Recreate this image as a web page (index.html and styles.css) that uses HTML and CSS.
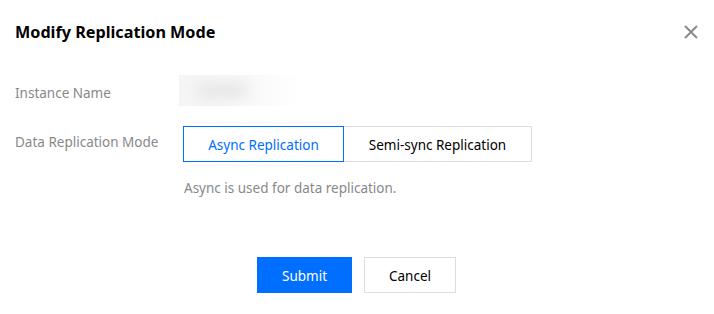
FILE: index.html
```html
<!DOCTYPE html>
<html>
<head>
    <title>Modify Replication Mode</title>
    <link rel="stylesheet" href="styles.css">
</head>
<body>
    <div class="dialog">
        <div class="dialog-header">
            <h2 class="dialog-title">Modify Replication Mode</h2>
            <button class="close-btn" aria-label="Close">
                <svg width="14" height="14" viewBox="0 0 14 14">
                    <path d="M1 1L13 13M13 1L1 13" stroke="#888" stroke-width="1.9" fill="none"/>
                </svg>
            </button>
        </div>

        <div class="form">
            <div class="form-row">
                <div class="form-label label-name">Instance Name</div>
                <div class="form-control">
                    <div class="masked-value"><span class="blur"></span></div>
                </div>
            </div>
            <div class="form-row">
                <div class="form-label label-mode">Data Replication Mode</div>
                <div class="form-control">
                    <div class="segment">
                        <button class="segment-item active">Async Replication</button>
                        <button class="segment-item">Semi-sync Replication</button>
                    </div>
                    <div class="form-help">Async is used for data replication.</div>
                </div>
            </div>
        </div>

        <div class="dialog-footer">
            <button class="btn btn-primary">Submit</button>
            <button class="btn">Cancel</button>
        </div>
    </div>
</body>
</html>
```

FILE: styles.css
```css
body {
    margin: 0;
    background: #fff;
    font-family: "Noto Sans", "Open Sans", sans-serif;
    font-size: 13.5px;
    color: #000;
}

.dialog {
    width: 714px;
    height: 314px;
    box-sizing: border-box;
    padding: 20px 15px 0 15px;
}

.dialog-header {
    display: flex;
    justify-content: space-between;
    align-items: center;
    height: 24px;
}

.dialog-title {
    margin: 0;
    font-size: 16.2px;
    font-weight: 700;
    line-height: 24px;
}

.close-btn {
    border: none;
    background: none;
    padding: 0;
    margin-right: 1px;
    width: 14px;
    height: 14px;
    cursor: pointer;
    display: flex;
}

.form {
    margin-top: 31px;
    display: flex;
    flex-direction: column;
    gap: 20px;
}

.form-row {
    display: flex;
    align-items: flex-start;
}

.form-label {
    width: 168px;
    color: #888;
    line-height: 20px;
}

.label-name {
    padding-top: 8px;
}

.label-mode {
    padding-top: 6px;
}

/* скрытое имя инстанса */
.masked-value {
    position: relative;
    overflow: hidden;
    width: 120px;
    height: 31px;
    margin-left: -4px;
    background: linear-gradient(90deg, #f5f5f5, #f8f8f8 55%, #fff);
}

.blur {
    position: absolute;
    left: 18px;
    top: 9px;
    width: 50px;
    height: 13px;
    background: #e4e4e4;
    border-radius: 6px;
    filter: blur(7px);
}

.segment {
    display: flex;
}

.segment-item {
    height: 36px;
    padding: 2px 0 0;
    background: #fff;
    border: 1px solid #ddd;
    font-family: inherit;
    font-size: 13.5px;
    color: #000;
    cursor: pointer;
}

.segment-item + .segment-item {
    border-left: none;
}

.segment-item.active {
    width: 161px;
    border-color: #006eff;
    color: #006eff;
}

.segment-item:not(.active) {
    width: 188px;
}

.form-help {
    margin-top: 16px;
    color: #888;
    line-height: 20px;
    padding-left: 1px;
}

.dialog-footer {
    margin-top: 59px;
    display: flex;
    justify-content: center;
    gap: 12px;
    padding-right: 1px;
}

.btn {
    height: 36px;
    width: 92px;
    padding: 2px 0 0;
    border: 1px solid #ddd;
    background: #fff;
    font-family: inherit;
    font-size: 13.5px;
    color: #000;
    cursor: pointer;
}

.btn-primary {
    width: 95px;
    background: #006eff;
    border-color: #006eff;
    color: #fff;
}
```
